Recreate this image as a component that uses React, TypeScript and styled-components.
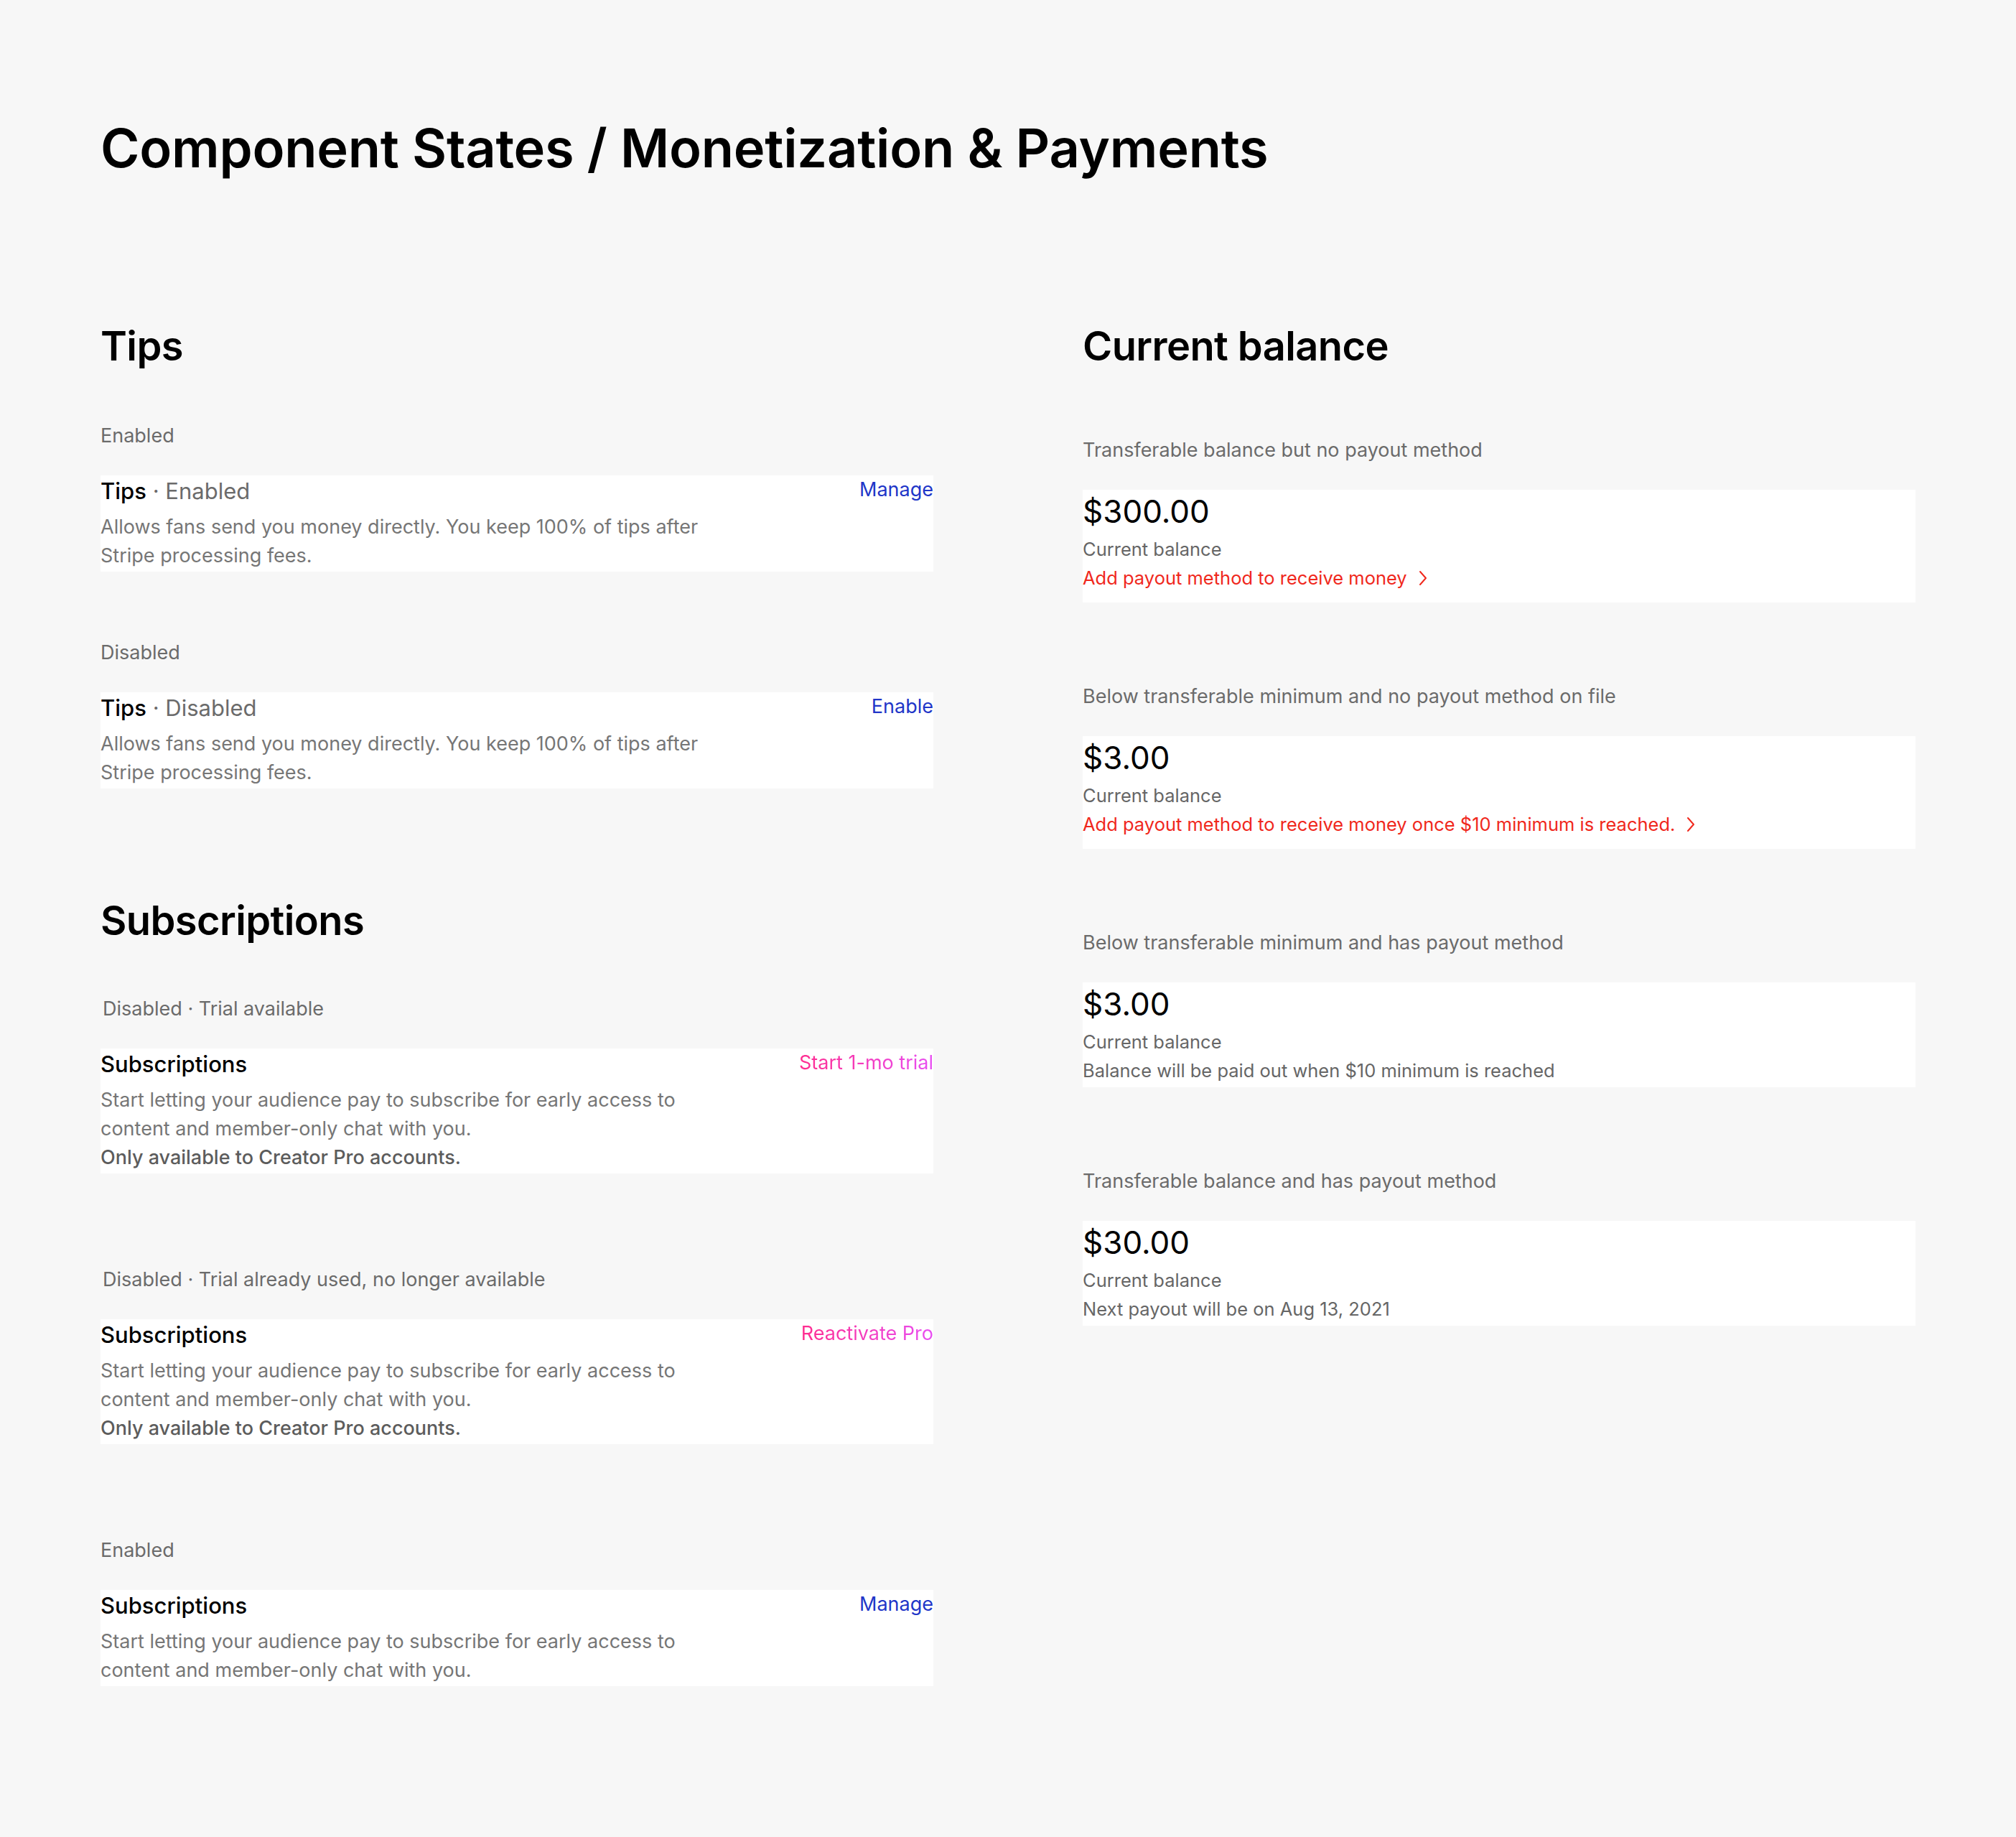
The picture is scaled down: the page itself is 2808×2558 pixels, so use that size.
import React from "react";
import styled, { createGlobalStyle, css } from "styled-components";

const GlobalStyle = createGlobalStyle`
  html, body {
    margin: 0;
    padding: 0;
    background: #f7f7f7;
  }
  body {
    font-family: Inter, "Noto Sans", "Liberation Sans", sans-serif;
    -webkit-font-smoothing: antialiased;
    color: #000;
  }
  * { box-sizing: border-box; }
`;

const Page = styled.main`
  min-height: 100vh;
  padding: 162px 140px 120px;
  background: #f7f7f7;
`;

const PageTitle = styled.h1`
  margin: 0;
  font-size: 74px;
  line-height: 89px;
  font-weight: 600;
  letter-spacing: -0.25px;
`;

const Columns = styled.div`
  margin-top: 198px;
  display: grid;
  grid-template-columns: 1160px 1160px;
  column-gap: 208px;
  align-items: start;
`;

const Column = styled.div`
  display: flex;
  flex-direction: column;
`;

const Section = styled.section<{ $offset?: number }>`
  display: flex;
  flex-direction: column;
  margin-top: ${(p) => p.$offset ?? 0}px;
`;

const SectionHeading = styled.h2`
  margin: 0;
  font-size: 56px;
  line-height: 67px;
  font-weight: 600;
  letter-spacing: -0.6px;
`;

const StateList = styled.div<{ $gap: number; $top: number }>`
  display: flex;
  flex-direction: column;
  gap: ${(p) => p.$gap}px;
  margin-top: ${(p) => p.$top}px;
`;

const StateBlock = styled.div`
  display: flex;
  flex-direction: column;
  gap: 35px;
`;

const StateLabel = styled.div<{ $indent?: boolean }>`
  font-size: 27px;
  line-height: 40px;
  color: #6b6b6b;
  padding-left: ${(p) => (p.$indent ? 3 : 0)}px;
`;

const FeatureCard = styled.div`
  background: #ffffff;
  padding-bottom: 2px;
  display: flex;
  flex-direction: column;
`;

const CardHead = styled.div`
  display: flex;
  justify-content: space-between;
  align-items: flex-start;
`;

const CardTitle = styled.div`
  font-size: 31px;
  line-height: 44px;
  font-weight: 500;
  color: #000;
`;

const Muted = styled.span`
  font-weight: 400;
  color: #6b6b6b;
`;

type ActionTone = "blue" | "pink";

const Action = styled.a<{ $tone: ActionTone }>`
  font-size: 27px;
  line-height: 40px;
  cursor: pointer;
  text-decoration: none;
  ${(p) =>
    p.$tone === "blue"
      ? css`
          color: #2136c8;
        `
      : css`
          background: linear-gradient(90deg, #ff2d8f 0%, #e84ef2 100%);
          -webkit-background-clip: text;
          background-clip: text;
          color: transparent;
        `}
`;

const Desc = styled.p`
  margin: 8px 0 0;
  max-width: 860px;
  font-size: 27px;
  line-height: 40px;
  color: #767676;
`;

const DescNote = styled.span`
  display: block;
  color: #5c5c5c;
  font-weight: 500;
`;

const BalanceCard = styled.div<{ $alert?: boolean }>`
  background: #ffffff;
  display: flex;
  flex-direction: column;
  padding: ${(p) => (p.$alert ? "5px 0 14px" : "5px 0 3px")};
`;

const Amount = styled.div`
  font-size: 44px;
  line-height: 50px;
  font-weight: 400;
  color: #000;
  margin-bottom: 8px;
`;

const Meta = styled.div`
  font-size: 25.5px;
  line-height: 40px;
  color: #666666;
`;

const AlertLink = styled.a`
  display: inline-flex;
  align-items: center;
  gap: 16px;
  font-size: 25.5px;
  line-height: 40px;
  color: #f0281c;
  text-decoration: none;
  cursor: pointer;
`;

const Chevron = () => (
  <svg width="12" height="22" viewBox="0 0 12 22" fill="none" aria-hidden>
    <polyline
      points="2,2 10,11 2,20"
      stroke="#f0281c"
      strokeWidth="2"
      strokeLinecap="round"
      strokeLinejoin="round"
    />
  </svg>
);

type Feature = {
  label: string;
  indent?: boolean;
  title: string;
  status?: string;
  action: string;
  tone: ActionTone;
  desc: string;
  note?: string;
};

const tipsDesc =
  "Allows fans send you money directly. You keep 100% of tips after Stripe processing fees.";
const subsDesc =
  "Start letting your audience pay to subscribe for early access to content and member-only chat with you.";

const tips: Feature[] = [
  { label: "Enabled", title: "Tips", status: "Enabled", action: "Manage", tone: "blue", desc: tipsDesc },
  { label: "Disabled", title: "Tips", status: "Disabled", action: "Enable", tone: "blue", desc: tipsDesc },
];

const subs: Feature[] = [
  {
    label: "Disabled · Trial available",
    indent: true,
    title: "Subscriptions",
    action: "Start 1-mo trial",
    tone: "pink",
    desc: subsDesc,
    note: "Only available to Creator Pro accounts.",
  },
  {
    label: "Disabled · Trial already used, no longer available",
    indent: true,
    title: "Subscriptions",
    action: "Reactivate Pro",
    tone: "pink",
    desc: subsDesc,
    note: "Only available to Creator Pro accounts.",
  },
  { label: "Enabled", title: "Subscriptions", action: "Manage", tone: "blue", desc: subsDesc },
];

type Balance = { label: string; amount: string; alert?: string; note?: string };

const balances: Balance[] = [
  { label: "Transferable balance but no payout method", amount: "$300.00", alert: "Add payout method to receive money" },
  {
    label: "Below transferable minimum and no payout method on file",
    amount: "$3.00",
    alert: "Add payout method to receive money once $10 minimum is reached.",
  },
  {
    label: "Below transferable minimum and has payout method",
    amount: "$3.00",
    note: "Balance will be paid out when $10 minimum is reached",
  },
  { label: "Transferable balance and has payout method", amount: "$30.00", note: "Next payout will be on Aug 13, 2021" },
];

const FeatureState = ({ f }: { f: Feature }) => (
  <StateBlock>
    <StateLabel $indent={f.indent}>{f.label}</StateLabel>
    <FeatureCard>
      <CardHead>
        <CardTitle>
          {f.title}
          {f.status && <Muted> · {f.status}</Muted>}
        </CardTitle>
        <Action $tone={f.tone}>{f.action}</Action>
      </CardHead>
      <Desc>
        {f.desc}
        {f.note && <DescNote>{f.note}</DescNote>}
      </Desc>
    </FeatureCard>
  </StateBlock>
);

const BalanceState = ({ b }: { b: Balance }) => (
  <StateBlock>
    <StateLabel>{b.label}</StateLabel>
    <BalanceCard $alert={!!b.alert}>
      <Amount>{b.amount}</Amount>
      <Meta>Current balance</Meta>
      {b.alert ? (
        <div>
          <AlertLink>
            {b.alert}
            <Chevron />
          </AlertLink>
        </div>
      ) : (
        <Meta>{b.note}</Meta>
      )}
    </BalanceCard>
  </StateBlock>
);

export default function App() {
  return (
    <>
      <GlobalStyle />
      <Page>
        <PageTitle>Component States / Monetization &amp; Payments</PageTitle>
        <Columns>
          <Column>
            <Section>
              <SectionHeading>Tips</SectionHeading>
              <StateList $gap={93} $top={71}>
                {tips.map((f, i) => (
                  <FeatureState key={i} f={f} />
                ))}
              </StateList>
            </Section>
            <Section $offset={151}>
              <SectionHeading>Subscriptions</SectionHeading>
              <StateList $gap={128} $top={69}>
                {subs.map((f, i) => (
                  <FeatureState key={i} f={f} />
                ))}
              </StateList>
            </Section>
          </Column>
          <Column>
            <Section>
              <SectionHeading>Current balance</SectionHeading>
              <StateList $gap={111} $top={91}>
                {balances.map((b, i) => (
                  <BalanceState key={i} b={b} />
                ))}
              </StateList>
            </Section>
          </Column>
        </Columns>
      </Page>
    </>
  );
}
